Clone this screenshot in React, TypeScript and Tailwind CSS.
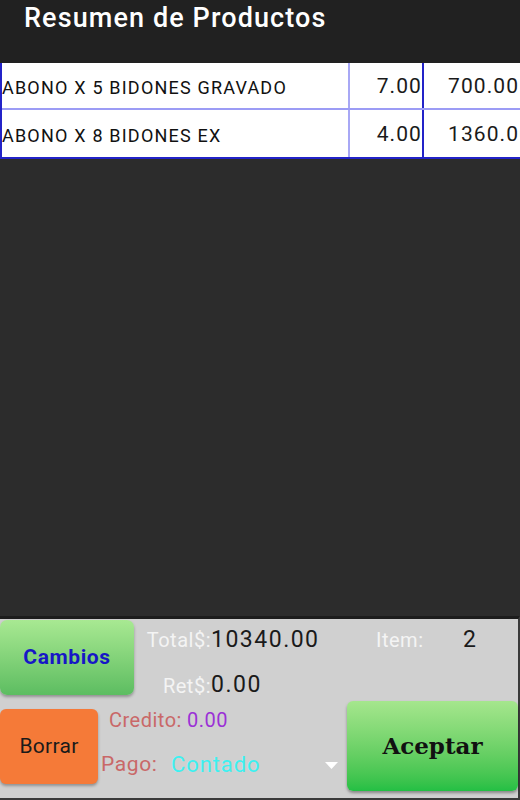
import React from 'react';

const rows = [
  { name: 'ABONO X 5 BIDONES GRAVADO', qty: '7.00', amount: '700.00' },
  { name: 'ABONO X 8 BIDONES EX', qty: '4.00', amount: '1360.00' },
];

export default function App() {
  return (
    <div className="w-[520px] h-[800px] flex flex-col bg-[#2c2c2c] overflow-hidden font-['Roboto',sans-serif]">
      {/* header */}
      <div className="h-[63px] shrink-0 bg-[#212121] pl-[24px]">
        <h1 className="text-[27px] leading-[36px] font-medium text-white tracking-[1.1px]">Resumen de Productos</h1>
      </div>

      {/* product table */}
      <div className="bg-white border-l-2 border-b-2 border-[#2323c8]">
        {rows.map((r, i) => (
          <div
            key={r.name}
            className={`flex h-[47px] items-center ${i === 0 ? 'border-b-2 border-[#9c9cf5]' : ''}`}
          >
            <div className="w-[348px] shrink-0 h-full flex items-center pt-[3px] border-r-2 border-[#a8a8f5] text-[18px] text-[#111] tracking-[1.2px] whitespace-nowrap overflow-hidden">
              {r.name}
            </div>
            <div className="w-[74px] shrink-0 h-full flex items-center justify-end pt-[3px] border-r-2 border-[#2323c8] text-[21px] text-[#1a1a1a] tracking-[1.1px]">
              {r.qty}
            </div>
            <div className="flex-1 h-full flex items-center pt-[3px] pl-[24px] text-[21px] text-[#1a1a1a] tracking-[1.1px] whitespace-nowrap overflow-hidden">
              {r.amount}
            </div>
          </div>
        ))}
      </div>

      <div className="flex-1" />

      {/* bottom panel */}
      <div className="h-[184px] shrink-0 bg-[#d0d0d0] border-t-[3px] border-[#1c1c1c] border-b-[2px] border-b-[#3a3a3a] border-r-2 border-r-[#3a3a3a] flex flex-col">
        <div className="h-[80px] flex">
          <button className="mt-[1px] w-[134px] h-[75px] rounded-[7px] bg-gradient-to-b from-[#a8e992] to-[#5cbd61] shadow-[0_2px_3px_rgba(0,0,0,0.3)] text-[21px] font-bold text-[#1717c6] tracking-[0.6px]">
            Cambios
          </button>
          <div className="flex flex-col">
            <div className="flex items-center h-[48px] pt-[4px]">
              <span className="w-[77px] text-right text-[20px] text-[#f4f4f4] tracking-[0.5px]">Total$:</span>
              <span className="w-[165px] text-[23px] text-[#1a1a1a] tracking-[1.5px]">10340.00</span>
              <span className="w-[87px] text-[20px] text-[#f4f4f4] tracking-[0.5px]">Item:</span>
              <span className="text-[23px] text-[#1a1a1a]">2</span>
            </div>
            <div className="flex items-center h-[42px] pt-[14px]">
              <span className="w-[77px] text-right text-[20px] text-[#f4f4f4] tracking-[0.5px]">Ret$:</span>
              <span className="text-[23px] text-[#1a1a1a] tracking-[1.5px]">0.00</span>
            </div>
          </div>
        </div>
        <div className="flex-1 flex">
          <button className="mt-[10px] w-[98px] h-[75px] rounded-[6px] bg-[#f57a38] shadow-[0_2px_3px_rgba(0,0,0,0.3)] text-[21px] text-[#1a1a1a] tracking-[0.3px]">
            Borrar
          </button>
          <div className="w-[249px] flex flex-col">
            <div className="h-[40px] flex items-center pl-[11px] pt-[2px] text-[20px] tracking-[0.5px]">
              <span className="text-[#c96868]">Credito:</span>
              <span className="ml-[5px] text-[#9b31d6]">0.00</span>
            </div>
            <div className="h-[48px] flex items-center pl-[3px] pt-[3px]">
              <span className="w-[70px] text-[21px] text-[#c96868] tracking-[0.6px]">Pago:</span>
              <span className="text-[22px] text-[#3ef0f0] tracking-[0.9px]">Contado</span>
              <svg className="ml-auto mr-[9px] mt-[2px]" width="13" height="7" viewBox="0 0 13 7">
                <polygon points="0,0 13,0 6.5,7" fill="#ffffff" />
              </svg>
            </div>
          </div>
          <button className="mt-[2px] flex-1 h-[90px] rounded-[6px] bg-gradient-to-b from-[#a5e68d] to-[#22bf44] shadow-[0_2px_3px_rgba(0,0,0,0.35)] font-['DejaVu_Serif',serif] font-bold text-[23px] text-[#111]">
            Aceptar
          </button>
        </div>
      </div>
    </div>
  );
}
